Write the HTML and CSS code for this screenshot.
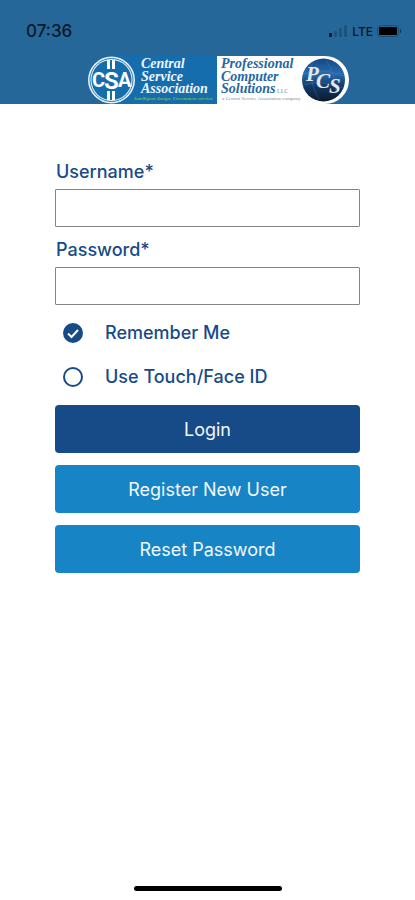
FILE: index.html
```html
<!DOCTYPE html>
<html lang="en">
<head>
<meta charset="utf-8">
<meta name="viewport" content="width=device-width, initial-scale=1">
<title>Login</title>
<link rel="stylesheet" href="styles.css">
</head>
<body>
<header class="header">
  <div class="status">
    <span class="time">07:36</span>
    <div class="indicators">
      <svg class="signal" viewBox="0 0 20 12" aria-hidden="true">
        <rect x="1" y="8" width="3" height="4" rx="1" fill="#071420"/>
        <g fill="#1d547f"><rect x="6" y="6" width="3" height="6" rx="1"/><rect x="11" y="3" width="3" height="9" rx="1"/><rect x="16" y="0" width="3" height="12" rx="1"/></g>
      </svg>
      <span class="network">LTE</span>
      <svg class="battery" viewBox="0 0 26 12" aria-hidden="true">
        <rect x=".5" y=".5" width="21" height="11" rx="3" fill="none" stroke="#1b4c73"/>
        <rect x="2" y="2" width="18" height="8" rx="1" fill="#000"/>
        <path d="M23 4c2 .5 2 3.500 0 4z" fill="#163d5e"/>
      </svg>
    </div>
  </div>
  <svg class="logo" viewBox="0 0 262 48" role="img" aria-label="Central Service Association and Professional Computer Solutions">
    <defs>
      <linearGradient id="globe" x1="0" y1="0" x2="0" y2="1">
        <stop offset="0" stop-color="#154784"/><stop offset=".35" stop-color="#286bad"/><stop offset=".65" stop-color="#123968"/><stop offset="1" stop-color="#0c192b"/>
      </linearGradient>
    </defs>
    <path d="M25 0H131V48H25z" fill="#166dad"/>
    <circle cx="24.500" cy="24" r="23.500" fill="#e6f1f9"/>
    <circle cx="24.500" cy="24" r="21.500" fill="none" stroke="#347db7"/>
    <circle cx="24.500" cy="24" r="20" fill="#166dad"/>
    <path d="M20 4H23V13H20zM25 4H28V13H25zM20 35H23V44H20zM25 35H28V44H25z" fill="#fff"/>
    <text class="emblem"><tspan x="5" y="31" font-size="20">C</tspan><tspan x="17" y="33" font-size="24">S</tspan><tspan x="31" y="31" font-size="20">A</tspan></text>
    <text class="wordmark light"><tspan x="54" y="12">Central</tspan><tspan x="54" y="25">Service</tspan><tspan x="54" y="37">Association</tspan></text>
    <text class="tagline" x="47" y="44">Intelligent design. Uncommon service.</text>
    <path d="M130 0H238A24 24 0 0 1 238 48H130z" fill="#fff"/>
    <text class="wordmark dark"><tspan x="134" y="12">Professional</tspan><tspan x="134" y="25">Computer</tspan><tspan x="134" y="37">Solutions</tspan></text>
    <g font-family="Liberation Serif, serif" fill="#8191a1">
      <text x="190" y="37" font-size="6">LLC</text>
      <text x="135" y="44" font-size="5">a Central Service Association company</text>
    </g>
    <circle cx="236.500" cy="24" r="21.500" fill="url(#globe)"/>
    <path d="M217 18Q236 11 256 20M216 29Q237 23 256 32M225 7Q221 25 232 43M239 4Q248 17 249 38" fill="none" stroke="#4685b9" stroke-width=".7" opacity=".5"/>
    <text class="globe-text"><tspan x="219" y="25">P</tspan><tspan x="229" y="32">C</tspan><tspan x="242" y="37">S</tspan></text>
  </svg>
</header>
<main class="main">
  <form class="form">
    <div class="field">
      <label for="username">Username*</label>
      <input id="username" type="text" required>
    </div>
    <div class="field">
      <label for="password">Password*</label>
      <input id="password" type="password" required>
    </div>
    <div class="options">
      <div class="option"><span class="tick"><input id="remember" type="checkbox" checked><svg viewBox="0 0 20 20" aria-hidden="true"><path d="M5 10.500L8.500 14L15 7"/></svg></span><label for="remember">Remember Me</label></div>
      <div class="option"><span class="tick"><input id="biometric" type="checkbox"></span><label for="biometric">Use Touch/Face ID</label></div>
    </div>
    <div class="actions">
      <button class="primary" type="submit">Login</button>
      <button type="button">Register New User</button>
      <button type="button">Reset Password</button>
    </div>
  </form>
</main>
<footer class="footer"><div class="home-bar"></div></footer>
</body>
</html>
```
FILE: styles.css
```css
* { box-sizing: border-box; }
body {
  display: flex;
  flex-direction: column;
  min-height: 100vh;
  margin: 0;
  background: #fff;
  color: #174b87;
  font-family: Inter, "Liberation Sans", sans-serif;
}
.header {
  display: flex;
  flex-direction: column;
  align-items: center;
  background: #266799;
}
.status {
  display: flex;
  align-items: center;
  justify-content: space-between;
  align-self: stretch;
  height: 56px;
  padding: 6px 12px 0 26px;
  color: #071727;
}
.time { font-size: 17px; font-weight: 500; }
.indicators { display: flex; align-items: center; gap: 4px; }
.signal { width: 20px; height: 12px; }
.network { font-size: 12px; font-weight: 500; }
.battery { width: 26px; height: 12px; }
.logo { display: block; width: 262px; height: 48px; margin-left: 20px; }
.emblem {
  fill: #fff;
  font-family: "Liberation Sans Narrow", Roboto, sans-serif;
  font-weight: 700;
}
.wordmark, .tagline, .globe-text {
  font-family: "Liberation Serif", serif;
  font-style: italic;
  font-weight: 700;
}
.wordmark { font-size: 14px; }
.light { fill: #edf6fc; }
.dark { fill: #2567a2; }
.tagline { font-size: 5px; fill: #78b54b; }
.globe-text { font-size: 21px; fill: #e5e8eb; }
.main { flex: 1; padding: 56px 55px 24px; }
.form { display: flex; flex-direction: column; }
.field { display: flex; flex-direction: column; gap: 5px; margin-bottom: 11px; }
label { font-size: 18px; font-weight: 500; line-height: 24px; }
.field label { padding-left: 1px; }
.field input {
  width: 100%;
  height: 38px;
  padding: 0 8px;
  border: 1px solid #858585;
  border-radius: 1px;
  background: #fff;
  font: inherit;
}
.options { margin-top: -5px; }
.option { display: flex; align-items: center; gap: 22px; height: 44px; padding-left: 8px; }
.tick { display: grid; width: 20px; height: 20px; }
.tick input, .tick svg { grid-area: 1 / 1; width: 20px; height: 20px; margin: 0; }
.tick input {
  appearance: none;
  border: 2px solid #174b87;
  border-radius: 50%;
}
.tick input:checked { background: #174b87; }
.tick svg { fill: none; stroke: #fff; stroke-width: 2; pointer-events: none; }
.tick input:not(:checked) + svg { display: none; }
.actions { display: flex; flex-direction: column; gap: 12px; margin-top: 6px; }
button {
  width: 100%;
  height: 48px;
  border: 0;
  border-radius: 4px;
  background: #1784c5;
  color: #f1f8fd;
  font-family: inherit;
  font-size: 18px;
  font-weight: 400;
}
.primary { background: #174b87; }
.footer { display: flex; justify-content: center; padding-bottom: 9px; }
.home-bar { width: 148px; height: 5px; border-radius: 3px; background: #000; }
```
